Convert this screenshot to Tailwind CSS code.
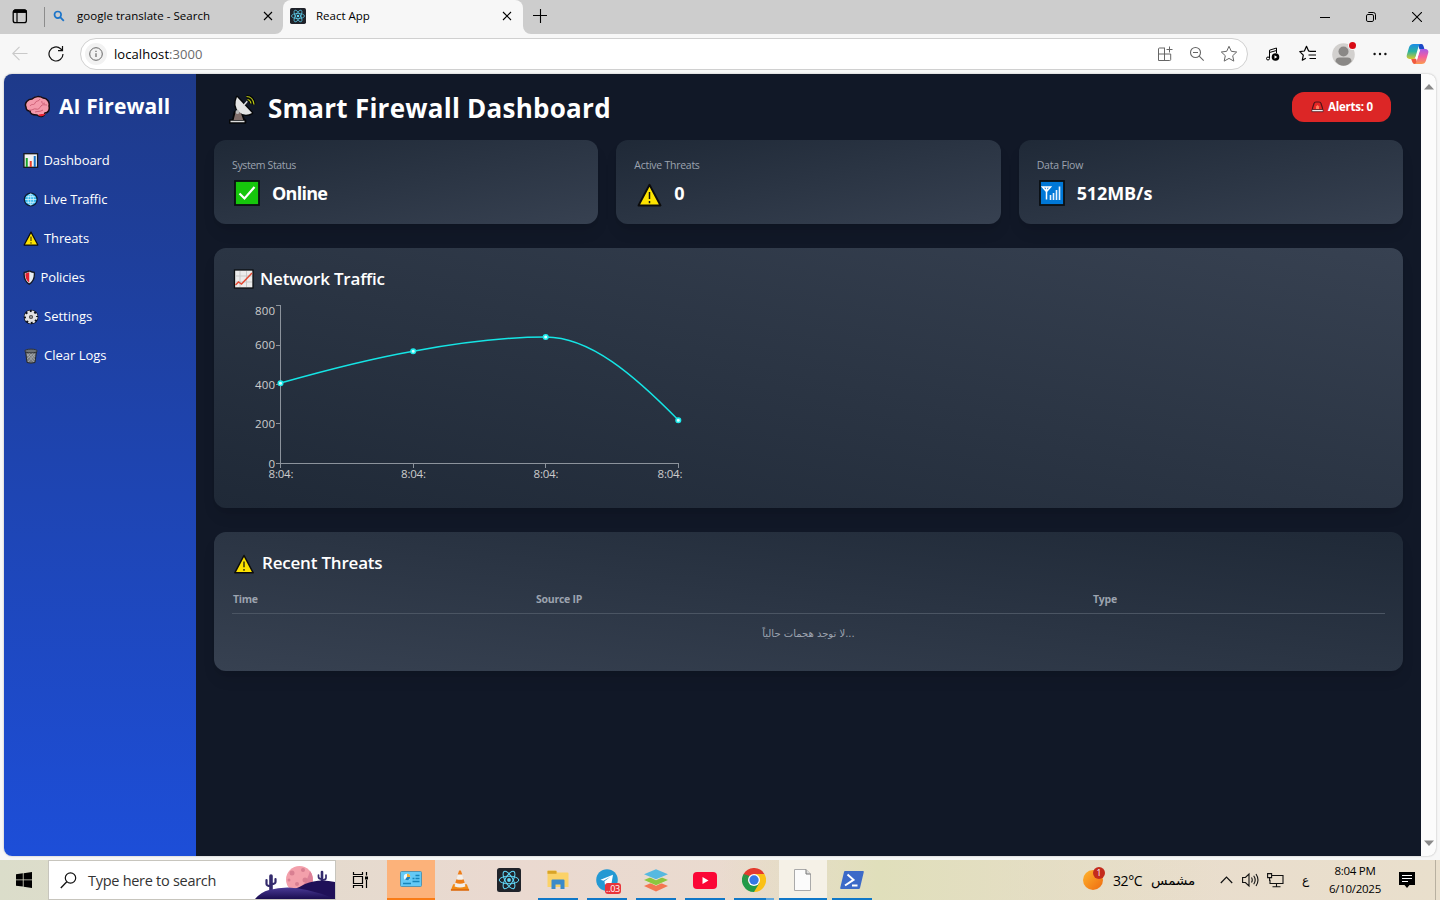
<!DOCTYPE html>
<html lang="en">
<head>
<meta charset="utf-8">
<title>React App</title>
<script src="https://cdn.jsdelivr.net/npm/@tailwindcss/browser@4"></script>
</head>
<body class="w-[1440px] h-[900px] overflow-hidden flex flex-col bg-[#f7f7f7] font-['Open_Sans','Noto_Sans',sans-serif] text-black">
<svg class="hidden">
  <defs>
    <symbol id="warn" viewBox="0 0 24 24"><path d="M12 1.800 23 22.500H1Z" fill="#fde300" stroke="#0c0c0c" stroke-width="1.900" stroke-linejoin="round"/><path d="M12 9v7M12 18v2.200" stroke="#111" stroke-width="1.500"/></symbol>
    <symbol id="react" viewBox="0 0 24 24"><rect width="24" height="24" rx="2.5" fill="#20232a"/><g fill="none" stroke="#61dafb" stroke-width="1"><ellipse cx="12" cy="12" rx="9.8" ry="3.8"/><ellipse cx="12" cy="12" rx="9.8" ry="3.8" transform="rotate(60 12 12)"/><ellipse cx="12" cy="12" rx="9.8" ry="3.8" transform="rotate(120 12 12)"/></g><circle cx="12" cy="12" r="1.9" fill="#61dafb"/></symbol>
  </defs>
</svg>

<!-- tab strip -->
<header class="h-[34px] shrink-0 bg-[#cdcdcd] flex">
  <div class="w-11 flex items-center pl-3 pb-[2px]"><svg width="16" height="16" viewBox="0 0 16 16"><rect x="1.2" y="2" width="13.2" height="12.6" rx="2.2" fill="none" stroke="#000" stroke-width="1.3"/><path d="M1.5 4.4V3.6a1.6 1.6 0 0 1 1.6-1.6h9.8a1.6 1.6 0 0 1 1.6 1.6v.8z" fill="#000" stroke="#000"/><path d="M5 4v10.5" stroke="#000" stroke-width="1.2"/></svg></div>
  <div class="w-px h-5 mt-[7px] bg-[#8c8c8c]"></div>
  <div class="w-[238px] flex items-center pb-[2px] pl-[8px] pr-[10px] text-[11.500px]">
    <svg width="12" height="12" viewBox="0 0 12 12"><circle cx="4.8" cy="4.8" r="3.3" fill="none" stroke="#1b74c9" stroke-width="1.7"/><path d="m7.2 7.2 3.6 3.6" stroke="#1b74c9" stroke-width="1.8"/></svg>
    <span class="ml-[12px] grow whitespace-nowrap tracking-[0.03px]">google translate - Search</span>
    <svg width="10" height="10" viewBox="0 0 10 10"><path d="m1 1 8 8m0-8-8 8" stroke="#000" stroke-width="1.1"/></svg>
  </div>
  <div class="w-[240px] bg-[#f7f7f7] rounded-t-lg flex items-center pb-[2px] pl-[7px] pr-[11px] text-[11.500px] relative">
    <svg class="absolute -left-2 bottom-0" width="8" height="8"><path d="M8 0v8H0a8 8 0 0 0 8-8" fill="#f7f7f7"/></svg>
    <svg class="absolute -right-2 bottom-0" width="8" height="8"><path d="M0 0v8h8a8 8 0 0 1-8-8" fill="#f7f7f7"/></svg>
    <svg width="16" height="16"><use href="#react"/></svg>
    <span class="ml-[10px] grow whitespace-nowrap">React App</span>
    <svg width="10" height="10" viewBox="0 0 10 10"><path d="m1 1 8 8m0-8-8 8" stroke="#000" stroke-width="1.1"/></svg>
  </div>
  <svg class="ml-[10px] mt-[9px]" width="14" height="14"><path d="M7.5 0v14M0 6.5h14" stroke="#000" stroke-width="1.1"/></svg>
  <div class="ml-auto flex items-center gap-[36px] pr-[18px]">
    <svg width="10" height="10"><path d="M0 5.5h10" stroke="#000"/></svg>
    <svg width="10" height="10" viewBox="0 0 10 10"><rect x=".5" y="2.5" width="7" height="7" rx="1.4" fill="none" stroke="#000"/><path d="M2.3.5h5a2.2 2.2 0 0 1 2.2 2.2v5" fill="none" stroke="#000"/></svg>
    <svg width="10" height="10"><path d="m0 0 10 10M10 0 0 10" stroke="#000" stroke-width="1.1"/></svg>
  </div>
</header>

<!-- toolbar -->
<div class="h-[40px] shrink-0 flex items-center">
  <svg class="ml-[12px]" width="16" height="16" viewBox="0 0 16 16"><path d="M15.500 7.500H1M7.500.8.800 7.500l6.700 6.700" fill="none" stroke="#c9c9c9" stroke-width="1.1"/></svg>
  <svg class="ml-[20px]" width="16" height="18" viewBox="0 0 16 18"><path d="M15 9a7 7 0 1 1-2.400-5.300L14.500 5.500M14.500 1v4.700H10" fill="none" stroke="#111" stroke-width="1.2"/></svg>
  <div class="ml-4 w-[1168px] h-8 rounded-full bg-white border border-[#d0d0d0] flex items-center text-[13px]">
    <div class="ml-[4px] size-[22px] rounded-full bg-[#f2f2f2] flex items-center justify-center"><svg width="14" height="14"><circle cx="7" cy="7" r="6.300" fill="none" stroke="#666"/><path d="M7 6.200V10M7 3.800v1.300" stroke="#666" stroke-width="1.200"/></svg></div>
    <div class="ml-[7px] mt-px tracking-[0.07px] grow">localhost<span class="text-[#6b6b6b]">:3000</span></div>
    <svg width="16" height="16" viewBox="0 0 16 16" fill="none" stroke="#666"><path d="M8 2H2.500Q1.500 2 1.500 3v11.500h11.200q1 0 1-1V8H1.500M7.500 2v12.500M12.500 .5v6M9.500 3.500h6"/></svg>
    <svg class="ml-4" width="16" height="16" viewBox="0 0 16 16" fill="none" stroke="#666" stroke-width="1.100"><circle cx="6.500" cy="6.500" r="5"/><path d="m10.200 10.200 4.500 4.500M4 6.500h5"/></svg>
    <svg class="ml-[15px] mr-[9px]" width="18" height="18" viewBox="0 0 18 18" fill="none" stroke="#666" stroke-linejoin="round"><path d="m9 1.300 2.300 5 5.400.7-4 3.700 1.100 5.400L9 13.400l-4.800 2.700 1.100-5.400-4-3.700 5.400-.7z"/></svg>
  </div>
  <svg class="ml-[17px]" width="16" height="16" viewBox="0 0 16 16" fill="none" stroke="#000" stroke-width="1"><path d="M4.500 12V4.200L11.500 2v5M4.500 6.500l7-2"/><circle cx="3" cy="12.500" r="1.500"/><circle cx="10.500" cy="11" r="3.800" fill="#000" stroke="none"/><path d="m9.500 9.200 2.800 1.800-2.800 1.800z" fill="#fff" stroke="none"/></svg>
  <svg class="ml-[18px]" width="18" height="18" viewBox="0 0 18 18" fill="none" stroke="#000" stroke-width="1.200" stroke-linejoin="round"><path d="M10.500 6.200 9.600 6 7.500 1.300 5.400 6l-4.600.6 3.500 3.500-1 5.100 3.500-2M10.500 6.300h6.500M9.500 10h7.500M10.500 13.500H17"/></svg>
  <div class="ml-[15px] size-[23px] relative"><svg width="23" height="23"><circle cx="11.500" cy="11.500" r="11.300" fill="#d2d0ce"/><circle cx="11.500" cy="8.500" r="5" fill="#8a8886"/><path d="M3.500 18.500q0-4 4-4h8q4 0 4 4-3.500 4.200-8 4.200t-8-4.200" fill="#8a8886"/></svg><i class="absolute -top-px left-[17px] size-[7px] rounded-full bg-[#d80b15] ring-1 ring-[#f7f7f7]"></i></div>
  <svg class="ml-[18px]" width="14" height="4"><g fill="#111"><circle cx="1.600" cy="2" r="1.200"/><circle cx="7" cy="2" r="1.200"/><circle cx="12.400" cy="2" r="1.200"/></g></svg>
  <svg class="ml-[19px]" width="23" height="22" viewBox="0 0 23 22">
    <defs><linearGradient id="ca" x1="0" y1="0" x2="0" y2="1"><stop stop-color="#1a8be8"/><stop offset=".5" stop-color="#2bb3a0"/><stop offset="1" stop-color="#d8c92c"/></linearGradient><linearGradient id="cb" x1="0" y1="0" x2="0" y2="1"><stop stop-color="#a55be8"/><stop offset=".5" stop-color="#f25ea0"/><stop offset="1" stop-color="#fb9a4f"/></linearGradient></defs>
    <path d="M12 1h3.500q1.500.2 2 2l1 3.500h-5z" fill="#1b49c7"/><path d="M5 15.500h5L11.500 21H8.500q-1.600 0-2.200-2z" fill="#f0593e"/><path d="M7.500 1h7q-1.500.5-2 2.500L9.500 14q-.7 2-2.700 2H3.500Q0 15.500.8 12L3 4.500Q4 1 7.500 1z" fill="url(#ca)"/><path d="M8.500 21q1.500-.3 2-2.200L13.500 8.200q.6-2.200 2.700-2.200h3.300q3.600.5 2.700 4L20 17.500q-1 3.500-4.500 3.500z" fill="url(#cb)"/><path d="M13.200 6.500 10.200 16" stroke="#fff" stroke-width="1.800"/></svg>
</div>

<!-- page -->
<div class="h-[782px] shrink-0 mx-1 rounded-lg overflow-hidden flex bg-[#fcfcfc] shadow-[0_0_2px_rgba(0,0,0,.3)]">
  <aside class="w-48 shrink-0 bg-linear-to-b from-[#1e3a8a] to-[#1d4ed8] text-white">
    <div class="flex items-center h-[30px] mt-[18px] ml-5 text-[21px] font-bold">
      <svg width="27" height="24" viewBox="0 0 27 24"><path d="M2 12C0 8 4 4 8 4c3-3 8-3 11-1 4 0 7 4 6 8 1 4-1 7-4 7-1 4-5 4.500-8 2-4 0-7-1-7-4-2 0-4-1-4-4z" fill="#f59aab" stroke="#190d12" stroke-width="1.500"/><path d="M14 20c3-2 6 0 8-2-2 4-6 4-8 2" fill="#e81f32"/><path d="M6 11c2-3 4 0 5-3s4-1 5-4M5 15c3 1 5-2 7-1s4-1 5-3 4-1 6-1M18 6c-1 2 1 3 3 2M11 17c3-1 5 0 8-2" fill="none" stroke="#cf6178"/></svg>
      <span class="ml-2 whitespace-nowrap tracking-[0.1px]">AI Firewall</span>
    </div>
    <nav class="mt-[28px] ml-[19px] text-[13px] whitespace-nowrap tracking-[-0.12px]">
      <div class="h-[21px] mb-[18px] flex items-center gap-[5px]"><svg width="15.500" height="15" viewBox="0 0 15 15"><rect x=".7" y=".7" width="13.600" height="13.600" fill="#f1f1f1" stroke="#16181f" stroke-width="1.300"/><path d="M3.500 14V5" stroke="#18a32a" stroke-width="2"/><path d="M7.500 14V8" stroke="#e9402a" stroke-width="2"/><path d="M11.500 14V3" stroke="#1474c8" stroke-width="2"/></svg>Dashboard</div>
      <div class="h-[21px] mb-[18px] flex items-center gap-[5px]"><svg width="15.500" height="15" viewBox="0 0 15 15"><circle cx="7.500" cy="7.500" r="6.400" fill="#35b9ef" stroke="#101c34" stroke-width="1.300"/><g fill="none" stroke="#d5f4ff" stroke-width=".8"><ellipse cx="7.500" cy="7.500" rx="2.700" ry="5.600"/><path d="M7.500 2v11M2 7.500h11M3 4.700h9M3 10.300h9"/></g></svg>Live Traffic</div>
      <div class="h-[21px] mb-[18px] flex items-center gap-[5px]"><svg width="16" height="15"><use href="#warn" width="16" height="15"/></svg>Threats</div>
      <div class="h-[21px] mb-[18px] flex items-center gap-[5px]"><svg width="12.500" height="15" viewBox="0 0 12 15"><path d="M6 .8q3 1.500 5 1.500 1 8-5 12-6-4-5-12 2 0 5-1.500" fill="#e7edf2" stroke="#131722" stroke-width="1.300"/><path d="M6 2q-2 1.200-3.800 1.300-.6 6 3.800 9.400z" fill="#e52030"/></svg>Policies</div>
      <div class="h-[21px] mb-[18px] flex items-center gap-[5px] tracking-[0px]"><svg width="16" height="16" viewBox="0 0 16 16"><circle cx="8" cy="8" r="5.800" fill="none" stroke="#0d111c" stroke-width="3"/><circle cx="8" cy="8" r="5.500" fill="none" stroke="#e3e3e3" stroke-width="2.200" stroke-dasharray="2.500 1.820"/><circle cx="8" cy="8" r="3.600" fill="#4d4d4d" stroke="#e3e3e3" stroke-width="3"/><circle cx="8" cy="8" r=".8" fill="#ddd"/></svg>Settings</div>
      <div class="h-[21px] flex items-center gap-[5px] tracking-[0px]"><svg width="16" height="16" viewBox="0 0 16 16"><path d="M2.600 4 4 14.500q4 1.300 8 0L13.400 4z" fill="#777b7e" stroke="#25282d"/><path d="m4 6 7 8M6 5l6 7M9 5l3 4M12 6l-7 8M10 5l-6 6M7 5 4 8" stroke="#b6bbbd" stroke-width=".6"/><ellipse cx="8" cy="3" rx="6.300" ry="1.900" fill="#6d7276" stroke="#303338"/></svg>Clear Logs</div>
    </nav>
  </aside>

  <main class="w-[1225px] shrink-0 bg-[#111827] px-[18px] text-white">
    <div class="h-[66px] flex items-center justify-between pl-[15px] pr-3">
      <div class="flex items-center mt-[3px] text-[26px] font-bold">
        <svg width="28" height="30" viewBox="0 0 28 30"><g stroke="#050608" stroke-width="2.600" stroke-linejoin="round"><path d="M6 18h6l3 9H4z" fill="#83706d"/><path d="M1 26.500h15v2H1z" fill="#ddd"/><path d="M8 3Q4 12 10 18q6 5 13 1z" fill="#e2e2e2"/></g><path d="M1.500 27.500h14" stroke="#ddd" stroke-width="1.600"/><path d="M6.500 18.500h5.200l2.500 7.500H4.600z" fill="#806d69"/><path d="M8 3Q4 12 10 18q6 5 13 1z" fill="#e4e4e4"/><path d="m15 11 3.500-4" stroke="#ddd" stroke-width="1.500"/><circle cx="8.500" cy="18" r="2" fill="#bbb"/><path d="M17.500 2.500q6.500 0 7.500 8M18.500 5.500q3 .5 3.500 4" fill="none" stroke="#050608" stroke-width="3.400"/><path d="M17.500 2.500q6.500 0 7.500 8M18.500 5.500q3 .5 3.500 4" fill="none" stroke="#b6c414" stroke-width="1.200"/></svg>
        <h1 class="ml-[11px] whitespace-nowrap tracking-[0.25px]">Smart Firewall Dashboard</h1>
      </div>
      <div class="w-[99px] h-[30px] rounded-xl bg-[#dc2626] flex items-center pl-[19px] text-[11.500px] font-bold tracking-[-0.25px] whitespace-nowrap"><svg class="mr-[4px]" width="13" height="12" viewBox="0 0 13 12"><path d="M1.500 9V7L3 2.500Q3.300 1 5 1h3q1.700 0 2 1.500L11.500 7v2z" fill="#e52525" stroke="#52151a" stroke-width="1.200"/><path d="M5 8V5.500l1.500-1.500L8 5.500V8z" fill="#ff8060"/><path d="M.8 8.500h11.400v2.200H.8z" fill="#eee" stroke="#52151a" stroke-width=".8"/></svg>Alerts: 0</div>
    </div>

    <section class="grid grid-cols-3 gap-[18px]">
      <div class="h-[84px] rounded-xl bg-linear-to-br from-[#1f2937] to-[#374151] shadow-lg px-[18px] pt-[17px]">
        <div class="text-[10.500px] leading-4 text-[#9ca3af] tracking-[-0.36px]">System Status</div>
        <div class="h-[28px] mt-[6px] pl-[2px] flex items-center text-[18px] font-bold"><svg width="26" height="26"><rect x="1" y="1" width="24" height="24" fill="#16c60c" stroke="#0b0f12" stroke-width="1.800"/><path d="m5.500 13.500 5 5L20.500 7" fill="none" stroke="#fff" stroke-width="2.200"/></svg><span class="ml-3 tracking-[-0.75px]">Online</span></div>
      </div>
      <div class="h-[84px] rounded-xl bg-linear-to-br from-[#1f2937] to-[#374151] shadow-lg px-[18px] pt-[17px]">
        <div class="text-[10.500px] leading-4 text-[#9ca3af] tracking-[-0.26px]">Active Threats</div>
        <div class="h-[28px] mt-[6px] pl-[3px] flex items-center text-[18px] font-bold"><svg class="mt-[3px]" width="25" height="24"><use href="#warn"/></svg><span class="ml-3">0</span></div>
      </div>
      <div class="h-[84px] rounded-xl bg-linear-to-br from-[#1f2937] to-[#374151] shadow-lg px-[18px] pt-[17px]">
        <div class="text-[10.500px] leading-4 text-[#9ca3af] tracking-[-0.2px]">Data Flow</div>
        <div class="h-[28px] mt-[6px] pl-[2px] flex items-center text-[18px] font-bold"><svg width="26" height="26"><rect x="1" y="1" width="24" height="24" fill="#0078d7" stroke="#0b0f12" stroke-width="1.800"/><path d="M3.500 7h8l-4 4.500zM7.500 7v12.500" fill="none" stroke="#fff" stroke-width="1.500"/><path d="M11.500 20v-5M14.500 20v-7M17.500 20V10M20.500 20V6.500" stroke="#e6f3ff" stroke-width="1.600"/></svg><span class="ml-3 tracking-[-0.1px]">512MB/s</span></div>
      </div>
    </section>

    <section class="mt-6 h-[260px] rounded-xl bg-linear-to-tr from-[#1f2937] to-[#374151] shadow-lg px-[18px] pt-[17px]">
      <h2 class="h-[27px] pl-[1px] flex items-center text-[17px] font-semibold tracking-[-0.2px]"><svg class="mr-[6px]" width="21" height="20" viewBox="0 0 21 20"><rect x="1.500" y="1" width="18.500" height="18" fill="#ececec" stroke="#0c0f12" stroke-width="1.300"/><path d="M7 2v16M13.500 2v16M2 7h17M2 13h17" stroke="#c9c9c9"/><path d="m2.500 16 3-3 3 2L19 4" fill="none" stroke="#e34a35" stroke-width="1.500"/></svg>Network Traffic</h2>
      <svg class="block mt-[6px] font-['Open_Sans',sans-serif] text-[11.500px]" width="480" height="190" viewBox="232 298 480 190">
        <g fill="none" stroke="#8c939c"><path d="M280.500 306v158M280 463.500h398.500M276 305.500h5M276 345.500h5M276 384.500h5M276 423.500h5M276 463.500h5M280.500 463v5M413.500 463v5M545.500 463v5M678.500 463v5"/></g>
        <path d="M280.500 383C324.700 370.500 369 359 413.200 351.200 457.500 343 501.500 337 545.700 337 590 337 634 375 678.300 420" fill="none" stroke="#15e5e5" stroke-width="1.500"/>
        <g fill="#d8ffff" stroke="#1ce9ea" stroke-width="1.500"><circle cx="280.500" cy="383.200" r="2.300"/><circle cx="413.200" cy="351.200" r="2.300"/><circle cx="545.700" cy="337" r="2.300"/><circle cx="678.300" cy="420.200" r="2.300"/></g>
        <g fill="#ccc" text-anchor="end"><text x="275" y="315" textLength="20">800</text><text x="275" y="349" textLength="20">600</text><text x="275" y="389" textLength="20">400</text><text x="275" y="428" textLength="20">200</text><text x="275" y="467.500">0</text></g>
        <g fill="#ccc"><text x="268.500" y="478" textLength="25">8:04:</text><text x="401" y="478" textLength="25">8:04:</text><text x="533.500" y="478" textLength="25">8:04:</text><text x="657.500" y="478" textLength="25">8:04:</text></g>
      </svg>
    </section>

    <section class="mt-6 h-[139px] rounded-xl bg-linear-to-bl from-[#1f2937] to-[#374151] shadow-lg px-[18px] pt-[17px]">
      <h2 class="h-[27px] pl-[2px] flex items-center text-[17px] font-semibold tracking-[-0.2px]"><svg class="mr-2 mt-[2px]" width="20" height="20"><use href="#warn"/></svg>Recent Threats</h2>
      <div class="mt-[11px] h-[27px] border-b border-[#4b5563] grid grid-cols-[303px_557px_1fr] text-[10.500px] leading-6 font-bold text-[#9ca3af] tracking-[-0.25px] pl-px">
        <span>Time</span><span>Source IP</span><span>Type</span>
      </div>
      <div class="h-[38px] flex items-center justify-center text-[#9ca3af] text-[10px] font-['DejaVu_Sans',sans-serif]">لا توجد هجمات حالياً...</div>
    </section>
  </main>
  <div class="w-[15px] flex flex-col justify-between items-center pt-[9px] pb-[9px]">
    <svg width="10" height="7"><path d="M0 6.500 5 1l5 5.500z" fill="#8a8a8a"/></svg>
    <svg width="10" height="7"><path d="m0 .5 5 5.500 5-5.500z" fill="#8a8a8a"/></svg>
  </div>
</div>

<!-- taskbar -->
<footer class="mt-1 h-10 shrink-0 flex bg-linear-to-r from-[#dbddca] via-[#ead9d0] via-35% to-[#e9dfcc]">
  <div class="w-full h-full flex bg-linear-to-r from-transparent from-50% via-[#e0dfbb] via-61% to-transparent to-85%">
    <div class="w-12 flex items-center justify-center"><svg width="16" height="16"><path d="M0 2.300 6.800 1.300V7.500H0zM7.600 1.200 16 0v7.500H7.600zM0 8.300h6.800v6.300L0 13.700zM7.600 8.300H16V16l-8.400-1.200z"/></svg></div>
    <div class="w-72 bg-white border border-[#c7c5bd] flex items-center relative pl-[11px]">
      <svg width="17" height="17" viewBox="0 0 17 17"><circle cx="10.500" cy="6" r="5.200" fill="none" stroke="#111" stroke-width="1.200"/><path d="M6.800 9.700.8 16" stroke="#111" stroke-width="1.300"/></svg>
      <span class="ml-[11px] mt-px text-[14.500px] text-[#333] whitespace-nowrap tracking-[-0.28px]">Type here to search</span>
      <svg class="absolute right-0 bottom-0" width="80" height="38" viewBox="256 861 80 38">
        <defs><linearGradient id="hill" x1="0" y1="0" x2="0" y2="1"><stop stop-color="#4a3a96"/><stop offset="1" stop-color="#1a0d50"/></linearGradient></defs>
        <circle cx="300.500" cy="879.500" r="13.500" fill="#f3a0ab"/><path d="M311 871a13.500 13.500 0 0 1-20 18q14 3 20-18" fill="#dd8198"/><g fill="#d97f92"><circle cx="293" cy="873" r="2.500"/><circle cx="304" cy="870" r="2"/><circle cx="298" cy="884" r="2"/><circle cx="306" cy="880" r="2.500"/><circle cx="290" cy="880" r="1.500"/></g>
        <g fill="none" stroke="#332a6c" stroke-linecap="round"><path d="M272 892v-16" stroke-width="3.600"/><path d="M267.500 880v4q0 2 4.500 2M276.500 879v3q0 2-4.500 2" stroke-width="2.200"/><path d="M323 886v-14" stroke-width="2.600"/><path d="M319.500 875v2q0 2 3.500 2M327 875v3q0 2-4 2" stroke-width="1.700"/></g>
        <path d="M284 892q12-2 22-8 14-6 30-2v17h-52z" fill="#1f1058"/><path d="M256 899q6-7 14-9 18-5 38 0 14 3 28 9z" fill="url(#hill)"/>
      </svg>
    </div>
    <div class="w-12 flex items-center justify-center"><svg width="17" height="16" viewBox="0 0 17 16" fill="none" stroke="#000" stroke-width="1.200"><path d="M1.500 0v2.500h9V0M1.500 16v-2.500h9V16M1.500 4.500h9v7h-9zM14.500 0v3.500M14.500 8v8"/><path d="M13 4.500h3v3h-3z" fill="#000" stroke="none"/></svg></div>
    <div class="ml-[3px] w-12 bg-[#fcb27a] border-b-2 border-[#f97c16] flex items-center justify-center"><svg width="22" height="16" viewBox="0 0 22 16"><rect x=".5" y=".5" width="21" height="15" rx="1" fill="#63c9f5" stroke="#5a93ab"/><circle cx="7" cy="6" r="3.200" fill="#eaf8ff"/><path d="M7 6V2.800A3.200 3.200 0 0 1 10.200 6z" fill="#f6ae32"/><path d="M7 6h3.200A3.200 3.200 0 0 1 5 8.500z" fill="#1e80ba"/><path d="M12.500 7.500h2M12.500 10.500h7M3 12.500h8M15.500 4.500h4M15.500 7.500h4" stroke="#1685ba" stroke-width="1.400"/></svg></div>
    <div class="ml-px w-12 flex items-center justify-center"><svg width="20" height="23" viewBox="0 0 22 24"><path d="M3.500 16h15l2.500 6.500H1z" fill="#f08a16"/><path d="M10 1h2l5 17.500q-6 2.500-12 0z" fill="#f3f0ec"/><path d="M10 1h2l1.500 4.500h-5zM7 10.500q4 1.500 8 0l1.200 4q-5.200 2-10.400 0z" fill="#ee7d18"/><path d="M1 21.500h20v1.800H1z" fill="#dd690d"/></svg></div>
    <div class="ml-px w-12 flex items-center justify-center"><svg width="24" height="24"><use href="#react"/></svg></div>
    <div class="ml-px w-12 flex items-center justify-center relative"><svg width="22" height="20" viewBox="0 0 22 20"><path d="M.5 1.500Q.5.500 1.500.500h7l2 2h10q1 0 1 1V17H.5z" fill="#fbd268"/><path d="M.5.800h9v3h-9z" fill="#d9a426"/><path d="M4.500 10.500q0-1 1-1h11q1 0 1 1V19h-4v-4.500h-5V19h-4z" fill="#3a8ac9"/></svg><i class="absolute bottom-0 left-1 w-10 h-[2px] bg-[#1078c8]"></i></div>
    <div class="ml-px w-12 flex items-center justify-center relative"><svg width="22" height="22" viewBox="0 0 22 22"><circle cx="11" cy="11" r="10.800" fill="#2499d3"/><path d="M4.500 10.800 17 5.800l-2 11.500-4-3-2 2-.5-4 6-4.500-7 4z" fill="#fff"/></svg><span class="absolute left-[22px] top-[23px] w-4 h-[11px] rounded-[3px] bg-[#e8343a] text-white text-[9px] leading-[11px] text-center tracking-[-0.3px]">..03</span><i class="absolute bottom-0 left-1 w-10 h-[2px] bg-[#1078c8]"></i></div>
    <div class="ml-px w-12 flex items-center justify-center relative"><svg width="24" height="23" viewBox="0 0 24 23"><path d="m0 17 12-5 12 5-12 5.500z" fill="#f47651"/><path d="m0 11.300 12-5 12 5-12 5.500z" fill="#f3ead9"/><path d="m0 11 12-5 12 5-12 5.200z" fill="#8cc63f"/><path d="m0 5.800 12-5 12 5-12 5.500z" fill="#ecdcd2"/><path d="m0 5.300 12-5 12 5-12 5z" fill="#56b9e0"/></svg><i class="absolute bottom-0 left-1 w-10 h-[2px] bg-[#1078c8]"></i></div>
    <div class="ml-px w-12 flex items-center justify-center relative"><svg width="24" height="17"><rect width="24" height="17" rx="4" fill="#fb0636"/><path d="m9.500 5 6 3.500-6 3.500z" fill="#fff"/></svg><i class="absolute bottom-0 left-1 w-10 h-[2px] bg-[#1078c8]"></i></div>
    <div class="ml-px w-12 flex items-center justify-center relative"><svg width="24" height="24" viewBox="0 0 24 24"><path d="M12 12 1.600 6A12 12 0 0 1 22.400 6z" fill="#e33b2e"/><path d="M12 12 22.400 6A12 12 0 0 1 12 24z" fill="#fbc116"/><path d="M12 12v12A12 12 0 0 1 1.600 6z" fill="#229a48"/><path d="M12 6h10.400L17.300 15z" fill="#fbc116"/><path d="M6.800 15 1.600 6 12 6z" fill="#e33b2e"/><path d="M6.800 15 1.600 6l6 2z" fill="#229a48"/><path d="M17.300 15 12 24 7 15z" fill="#229a48"/><circle cx="12" cy="12" r="6" fill="#fff"/><circle cx="12" cy="12" r="4.700" fill="#3578e5"/></svg><i class="absolute bottom-0 left-1 w-8 h-[2px] bg-[#1078c8]"></i><i class="absolute bottom-0 left-9 w-2 h-[2px] bg-[#62a8dc]"></i></div>
    <div class="ml-px w-12 bg-[#f5f1e7] border-b-2 border-[#1078c8] flex items-center justify-center"><svg class="mt-[2px] mr-px" width="17" height="22" viewBox="0 0 17 22"><path d="M.5.500H12l4.500 4.500v16.500H.5z" fill="#fbfbfb" stroke="#aaa"/><path d="M12 .5V5h4.500" fill="#ddd" stroke="#777"/></svg></div>
    <div class="ml-px w-12 flex items-center justify-center relative"><svg width="24" height="18" viewBox="0 0 24 18"><path d="M5 0h18q1 0 .8 1L20 17q-.3 1-1.200 1H1Q0 18 .2 17L4 1q.2-1 1-1" fill="#3c6ac8"/><path d="m7.500 3.500 6 5.300L5 14.500M12 14.500h5.500" fill="none" stroke="#fff" stroke-width="2"/></svg><i class="absolute bottom-0 left-1 w-10 h-[2px] bg-[#1078c8]"></i></div>

    <div class="ml-auto flex items-center">
      <svg class="-mt-[2px]" width="22" height="24" viewBox="0 0 22 24"><defs><linearGradient id="sun" x1="0" y1="0" x2="1" y2="1"><stop stop-color="#ffb52d"/><stop offset="1" stop-color="#ee6a10"/></linearGradient></defs><circle cx="10" cy="13" r="10" fill="url(#sun)"/><circle cx="16" cy="6" r="6" fill="#c42b1c"/><text x="16" y="9" fill="#fff" font-size="8.500" text-anchor="middle">1</text></svg>
      <span class="ml-2 w-[38px] text-[14px] whitespace-nowrap tracking-[-0.4px]">32°C</span>
      <span class="w-[46px] text-[13.500px] font-['DejaVu_Sans',sans-serif] whitespace-nowrap">مشمس</span>
      <svg class="ml-[23px]" width="13" height="8"><path d="m.8 7 5.700-5.800L12.200 7" fill="none" stroke="#111" stroke-width="1.200"/></svg>
      <svg class="ml-[9px]" width="17" height="16" viewBox="0 0 17 16" fill="none" stroke="#111" stroke-width="1.100"><path d="M.6 5.500h2.800L7 2v12L3.400 10.500H.6zM9.500 5.500q1.500 2.500 0 5M11.700 3.800q3 4.200 0 8.400M14 2q4 6 0 12"/></svg>
      <svg class="ml-[8px]" width="17" height="15" viewBox="0 0 17 15" fill="none" stroke="#111" stroke-width="1.100"><path d="M5 2.500h11v8H3V7M9.500 10.500v3M5.500 13.700h8M.6.600h4v4h-4zM2.600 4.600V8"/></svg>
      <span class="w-[43px] text-center text-[12px] font-['DejaVu_Sans',sans-serif]">ع</span>
      <div class="w-[56px] text-center text-[11.500px] leading-[18px] tracking-[-0.28px] whitespace-nowrap">8:04 PM<br>6/10/2025</div>
      <svg class="ml-4 mr-[20px]" width="16" height="17"><path d="M0 0h16v13h-5.500L8 16l-2.500-3H0z"/><path d="M3 3.500h10M3 6.500h10M3 9.500h6" stroke="#fff"/></svg>
      <i class="w-px h-10 bg-[#b8b0a0] mr-[4px]"></i>
    </div>
  </div>
</footer>
</body>
</html>
